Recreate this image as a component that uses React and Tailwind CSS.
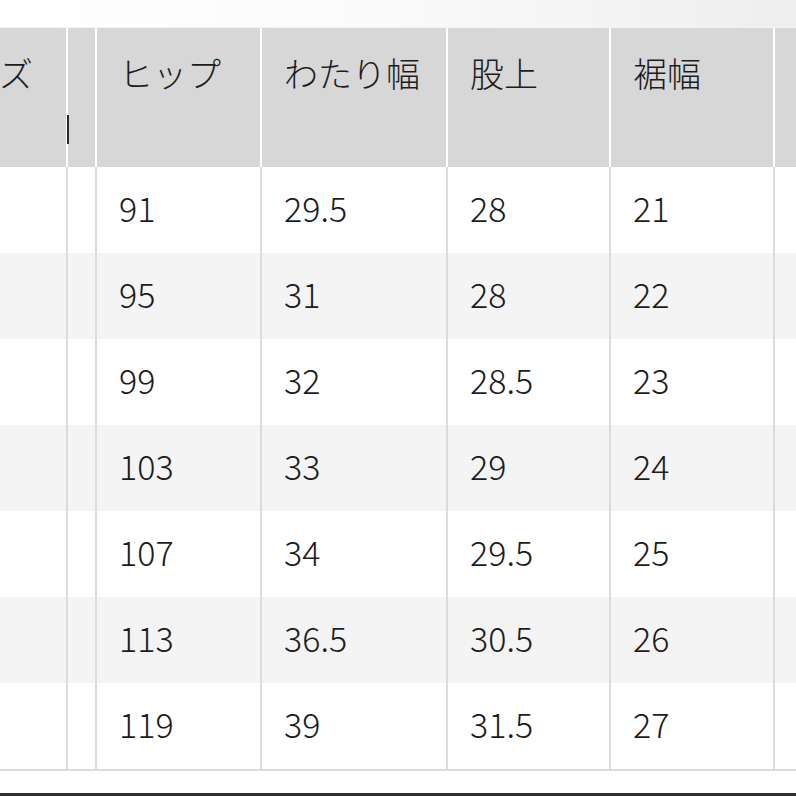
import React from "react";

const headers = ["サイズ", "", "ヒップ", "わたり幅", "股上", "裾幅", ""];

const rows = [
  ["91", "29.5", "28", "21"],
  ["95", "31", "28", "22"],
  ["99", "32", "28.5", "23"],
  ["103", "33", "29", "24"],
  ["107", "34", "29.5", "25"],
  ["113", "36.5", "30.5", "26"],
  ["119", "39", "31.5", "27"],
];

const grid = "grid grid-cols-[156px_29px_165px_186px_163px_164px_120px]";

export default function App() {
  return (
    <div
      className="w-[796px] h-[796px] overflow-hidden bg-white flex flex-col text-[#1c1c1c] font-light"
      style={{ fontFamily: '"Noto Sans CJK JP", "Noto Sans", sans-serif' }}
    >
      {/* top strip */}
      <div className="h-[28px] shrink-0 bg-gradient-to-r from-white via-[#fafafa] to-[#eeeeee] border-b border-[#f4f4f4]" />

      {/* table */}
      <div className="ml-[-90px] flex flex-col">
        {/* header */}
        <div className={`${grid} h-[139px] bg-[#d7d7d7]`}>
          {headers.map((h, i) => (
            <div
              key={i}
              className={`pt-[21px] pl-[22px] text-[34px] leading-[48px] whitespace-nowrap ${
                i > 0 ? "border-l-2 border-white" : ""
              }`}
            >
              {i === 1 ? (
                <div className="w-[2px] h-[29px] bg-[#2a2a2a] mt-[66px] -ml-[23px]" />
              ) : (
                h
              )}
            </div>
          ))}
        </div>

        {/* body */}
        {rows.map((r, ri) => (
          <div
            key={ri}
            className={`${grid} h-[86px] ${ri % 2 === 1 ? "bg-[#f4f4f4]" : "bg-white"}`}
          >
            <div />
            <div className="border-l-2 border-[#dcdcdc]" />
            {r.map((v, ci) => (
              <div
                key={ci}
                className="border-l-2 border-[#dcdcdc] flex items-center pl-[22px] pb-[4px] text-[34px] leading-none"
              >
                {v}
              </div>
            ))}
            <div className="border-l-2 border-[#dcdcdc]" />
          </div>
        ))}
        <div className="h-[2px] bg-[#dcdcdc]" />
      </div>

      <div className="flex-1" />
      <div className="h-[3px] bg-[#2e2e2e]" />
    </div>
  );
}
